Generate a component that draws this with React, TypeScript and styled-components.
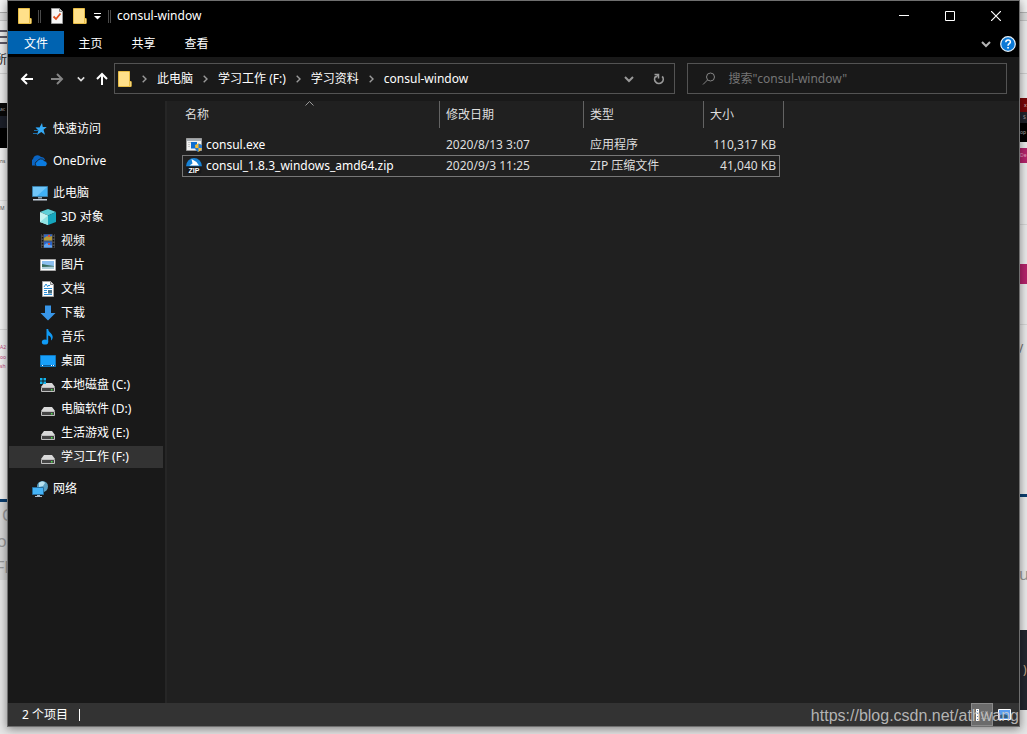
import React from "react";
import styled, { createGlobalStyle } from "styled-components";

const Global = createGlobalStyle`
  * { box-sizing: border-box; }
  body { margin: 0; background: #e6e6e6; }
  body, button, input, table {
    font-family: "Noto Sans", "Noto Sans CJK SC", sans-serif;
    font-size: 12px;
    line-height: 16px;
  }
  button { border: 0; padding: 0; background: none; color: inherit; cursor: default; }
  a { color: inherit; text-decoration: none; cursor: default; }
  svg { display: block; flex: none; }
`;

/* ---------- desktop behind the window ---------- */

const Desktop = styled.div`
  display: grid;
  grid-template-columns: 7px minmax(0, 1fr) 7px;
  grid-template-rows: minmax(0, 1fr) 7px;
  min-height: 100vh;
  overflow: hidden;
`;

const Strip = styled.div`
  grid-row: 1;
  display: flex;
  flex-direction: column;
  overflow: hidden;
`;

const Band = styled.div<{ $h: number; $bg?: string; $fg?: string; $size?: number; $shift?: number }>`
  flex: none;
  height: ${(p) => p.$h}px;
  background: ${(p) => p.$bg || "#ebebeb"};
  color: ${(p) => p.$fg || "#555"};
  font-size: ${(p) => p.$size || 5}px;
  line-height: ${(p) => p.$h}px;
  text-indent: ${(p) => p.$shift || 0}px;
  white-space: nowrap;
  overflow: hidden;
`;

type BandData = { h: number; bg?: string; fg?: string; size?: number; shift?: number; text?: string };

const leftBands: BandData[] = [
  { h: 12, bg: "#f1f1f1" },
  { h: 1, bg: "#a9a9a9" },
  { h: 7, bg: "#dcdcdc" },
  { h: 1, bg: "#c4c4c4" },
  { h: 9 },
  { h: 2, bg: "#5c5866" },
  { h: 4 },
  { h: 2, bg: "#5c5866" },
  { h: 4 },
  { h: 2, bg: "#5c5866" },
  { h: 8 },
  { h: 16, fg: "#222", size: 12, shift: -5, text: "所" },
  { h: 5 },
  { h: 1, bg: "#cfcfcf" },
  { h: 29 },
  { h: 13, bg: "#080808", fg: "#aaa", text: "ac" },
  { h: 12, bg: "#1b1f29" },
  { h: 20, bg: "#000" },
  { h: 6, bg: "#f0f0f0" },
  { h: 14, bg: "#f0f0f0", text: "ns" },
  { h: 32, bg: "#f0f0f0" },
  { h: 1, bg: "#dfdfdf" },
  { h: 14, bg: "#f0f0f0", text: "M" },
  { h: 114, bg: "#f0f0f0" },
  { h: 1, bg: "#d6d6d6" },
  { h: 12, bg: "#f0f0f0" },
  { h: 10, bg: "#f0f0f0", fg: "#c2457c", text: "A2" },
  { h: 10, bg: "#f0f0f0", fg: "#c2457c", text: "oo" },
  { h: 9, bg: "#f0f0f0", fg: "#c2457c", text: "sh" },
  { h: 128, bg: "#f0f0f0" },
  { h: 3, bg: "#0b3f70" },
  { h: 26, bg: "#d6d6d6", fg: "#999", size: 16, shift: 2, text: "C" },
  { h: 26, bg: "#d6d6d6", fg: "#999", size: 16, shift: -3, text: "or" },
  { h: 26, bg: "#d6d6d6", fg: "#999", size: 16, shift: -4, text: "FF" },
];

const rightBands: BandData[] = [
  { h: 12, bg: "#f1f1f1" },
  { h: 1, bg: "#b5b5b5" },
  { h: 7, bg: "#dcdcdc" },
  { h: 1, bg: "#c4c4c4" },
  { h: 52 },
  { h: 1, bg: "#cfcfcf" },
  { h: 24 },
  { h: 14, bg: "#7a0608", fg: "#ddd", shift: 4, text: "x" },
  { h: 11, bg: "#20232b", fg: "#aaa", shift: 3, text: "S" },
  { h: 19, bg: "#000", fg: "#bbb", text: "op" },
  { h: 6 },
  { h: 15, bg: "#b5236b", fg: "#eaa9c8", text: "De" },
  { h: 61 },
  { h: 1, bg: "#d6d6d6" },
  { h: 39 },
  { h: 20, bg: "#b5236b" },
  { h: 40 },
  { h: 1, bg: "#d6d6d6" },
  { h: 16 },
  { h: 16, fg: "#777", size: 12, shift: -4, text: "V" },
  { h: 137 },
  { h: 3, bg: "#0b3f70" },
  { h: 64 },
  { h: 26, fg: "#999", size: 16, shift: -1, text: "u" },
  { h: 43 },
  { h: 80, bg: "#23262f", fg: "#c9a98a", size: 12, shift: 3, text: ")" },
];

const Bands = ({ items }: { items: BandData[] }) => (
  <Strip aria-hidden="true">
    {items.map((b, i) => (
      <Band key={i} $h={b.h} $bg={b.bg} $fg={b.fg} $size={b.size} $shift={b.shift}>
        {b.text}
      </Band>
    ))}
  </Strip>
);

/* ---------- window frame ---------- */

const Window = styled.main`
  position: relative;
  grid-row: 1;
  display: flex;
  flex-direction: column;
  border: 1px solid #6f6f6f;
  background: #202020;
  color: #fff;
  box-shadow: 0 2px 9px rgba(0, 0, 0, 0.45);
`;

const TitleBar = styled.header`
  display: flex;
  align-items: center;
  height: 30px;
  padding-left: 10px;
  background: #000;
`;

const QuickTools = styled.div`
  display: flex;
  align-items: center;
  gap: 6px;
`;

const QuickButton = styled.button`
  padding: 0 4px;
  &:nth-of-type(2) { padding: 0; }
  &:nth-of-type(3) { padding: 0; }
`;

const Divider = styled.span`
  width: 3px;
  height: 13px;
  border: 1px solid #4a4a4a;
  border-width: 0 1px;
`;

const Title = styled.h1`
  flex: 1;
  margin: 0 0 0 6px;
  font-size: 12px;
  font-weight: 400;
`;

const CaptionButton = styled.button`
  display: flex;
  align-items: center;
  justify-content: center;
  width: 46px;
  height: 30px;
`;

const CaptionButtons = styled.div`
  display: flex;
`;

const Ribbon = styled.nav`
  display: flex;
  height: 26px;
  background: #000;
`;

const RibbonTab = styled.button<{ $active?: boolean }>`
  width: ${(p) => (p.$active ? 56 : 53)}px;
  height: 23px;
  padding-top: 2px;
  background: ${(p) => (p.$active ? "#0063b1" : "transparent")};
`;

const RibbonEnd = styled.div`
  display: flex;
  align-items: center;
  gap: 9px;
  margin-left: auto;
  padding-right: 3px;
`;

/* ---------- address row ---------- */

const AddressRow = styled.div`
  display: flex;
  gap: 12px;
  height: 44px;
  padding: 6px 12px 7px 9px;
  background: #191919;
`;

const History = styled.div`
  display: flex;
  align-items: center;
  gap: 10px;
  margin-right: -7px;
`;

const HistoryButton = styled.button<{ $wide?: boolean }>`
  padding: 0 ${(p) => (p.$wide ? 3 : 0)}px;
`;

const Field = styled.div<{ $grow: number }>`
  display: flex;
  align-items: center;
  flex: ${(p) => p.$grow} 1 0;
  min-width: 0;
  height: 31px;
  border: 1px solid #535353;
`;

const Crumbs = styled.ol`
  display: flex;
  flex: 1;
  align-items: center;
  margin: 0;
  padding: 0 0 0 3px;
  list-style: none;
  white-space: nowrap;
  overflow: hidden;
`;

const Crumb = styled.li`
  display: flex;
  align-items: center;
`;

const CrumbArrow = styled.svg`
  margin: 0 10px;
`;

const FieldButton = styled.button`
  display: flex;
  align-items: center;
  justify-content: center;
  width: 30px;
  height: 29px;
`;

const SearchInput = styled.input`
  flex: 1;
  min-width: 0;
  height: 29px;
  padding: 0 0 0 12px;
  border: 0;
  outline: 0;
  background: transparent;
  color: #fff;
  &::placeholder { color: #757575; opacity: 1; }
`;

/* ---------- body ---------- */

const Body = styled.div`
  display: flex;
  flex: 1;
  min-height: 0;
`;

const Sidebar = styled.nav`
  flex: none;
  width: 159px;
  padding: 17px 2px 0 1px;
  border-right: 2px solid #262626;
  background: #191919;
`;

const Tree = styled.ul`
  display: flex;
  flex-direction: column;
  gap: 2px;
  margin: 0;
  padding: 0;
  list-style: none;
`;

const Node = styled.li<{ $gap?: boolean }>`
  margin-top: ${(p) => (p.$gap ? 8 : 0)}px;
`;

const NodeLink = styled.a<{ $child?: boolean; $current?: boolean }>`
  display: flex;
  align-items: center;
  gap: 5px;
  height: 22px;
  padding-left: ${(p) => (p.$child ? 31 : 23)}px;
  background: ${(p) => (p.$current ? "#333" : "transparent")};
  white-space: nowrap;
`;

const Files = styled.section`
  flex: 1;
  min-width: 0;
  padding-left: 15px;
  overflow: hidden;
`;

const FileTable = styled.table`
  width: 602px;
  table-layout: fixed;
  border-collapse: separate;
  border-spacing: 0;
  color: #dedede;
`;

const Head = styled.th`
  position: relative;
  height: 27px;
  padding: 0 0 0 6px;
  border-right: 1px solid #636363;
  font-weight: 400;
  text-align: left;
  &:first-child { padding-left: 3px; }
`;

const SortMark = styled.svg`
  position: absolute;
  top: 0;
  left: 50%;
  margin-left: -6px;
`;

const Spacer = styled.td`
  height: 6px;
  padding: 0;
`;

const Cell = styled.td<{ $focus?: boolean; $right?: boolean }>`
  height: ${(p) => (p.$focus ? 22 : 21)}px;
  padding: 0 4px 0 6px;
  border: 0 solid #777;
  border-width: ${(p) => (p.$focus ? "1px 0" : "0")};
  text-align: ${(p) => (p.$right ? "right" : "left")};
  white-space: nowrap;
  &:first-child {
    padding-left: ${(p) => (p.$focus ? 3 : 4)}px;
    border-left-width: ${(p) => (p.$focus ? 1 : 0)}px;
    color: #fff;
  }
  &:nth-child(4) {
    padding-right: ${(p) => (p.$focus ? 3 : 4)}px;
    border-right-width: ${(p) => (p.$focus ? 1 : 0)}px;
  }
`;

const FileName = styled.a`
  display: flex;
  align-items: center;
  gap: 4px;
`;

const StatusBar = styled.footer`
  display: flex;
  align-items: center;
  height: 23px;
  padding: 0 3px 0 14px;
  background: #333;
`;

const StatusText = styled.span`
  padding-right: 11px;
  border-right: 1px solid #fff;
  line-height: 12px;
`;

const ViewButtons = styled.div`
  display: flex;
  margin-left: auto;
`;

const ViewButton = styled.button<{ $on?: boolean }>`
  display: flex;
  align-items: center;
  justify-content: center;
  width: ${(p) => (p.$on ? 22 : 23)}px;
  height: 23px;
  border: 1px solid ${(p) => (p.$on ? "#8a8a8a" : "transparent")};
  background: ${(p) => (p.$on ? "#6b6b6b" : "transparent")};
`;

const Watermark = styled.span`
  position: absolute;
  right: 0;
  bottom: 0;
  color: rgba(205, 205, 205, 0.85);
  font-family: "Liberation Sans", Arial, sans-serif;
  font-size: 16px;
  line-height: 20px;
  pointer-events: none;
`;

/* ---------- icons ---------- */

const Folder = () => (
  <svg width="14" height="16" viewBox="0 0 14 16">
    <path d="M.5.5h11v10h1.500v5H.5z" fill="#ffe08a" stroke="#e8bd45" />
    <path d="M11.500 10.500h1.500v5h-1.500z" fill="#fff0b8" stroke="#e8bd45" />
  </svg>
);

const CheckDoc = () => (
  <svg width="12" height="16" viewBox="0 0 12 16">
    <path d="M.5.5h8l3 3v12H.5z" fill="#f7f7f7" stroke="#9a9a9a" />
    <path d="M8.500.5v3h3" fill="#ccc" stroke="#888" />
    <path d="M2.500 8.500l2.500 2.500L9.500 5.500" fill="none" stroke="#e0501f" strokeWidth="1.800" />
  </svg>
);

const Chevron = ({ w = 10, color = "#ccc", sw = 2 }: { w?: number; color?: string; sw?: number }) => (
  <svg width={w} height={w} viewBox="0 0 10 10">
    <path d="M1 3l4 4 4-4" fill="none" stroke={color} strokeWidth={sw} />
  </svg>
);

const Arrow = ({ turn = 0, color = "#fff" }: { turn?: number; color?: string }) => (
  <svg width="14" height="14" viewBox="0 0 14 14">
    <path
      transform={`rotate(${turn} 7 7)`}
      d="M13 7H2M7 2L2 7l5 5"
      fill="none"
      stroke={color}
      strokeWidth="2"
    />
  </svg>
);

const Ico = ({ children }: { children: React.ReactNode }) => (
  <svg width="16" height="16" viewBox="0 0 16 16">{children}</svg>
);

const StarIcon = () => (
  <Ico>
    <path d="M10 2l.8 4h4l-3.300 2.800 1.500 5L9.300 11l-4.500 3 1.700-4.500L3.500 6.500h4z" fill="#35aaf5" />
    <path d="M4 6.500h3M2 9.500h4M1 12.500h4" stroke="#1b6fae" />
  </Ico>
);

const CloudIcon = () => (
  <Ico>
    <path d="M1 12.500a3 3 0 0 1 0-6A4.500 4.500 0 0 1 9 4a4 4 0 0 1 4 3l-4 1-5 4.500z" fill="#0a64c2" />
    <path d="M5 13.500a2.800 2.800 0 0 1 .3-5.300 4 4 0 0 1 7-.5 3 3 0 0 1 1 5.800z" fill="#0a7be0" stroke="#191919" strokeWidth=".8" />
  </Ico>
);

const PcIcon = () => (
  <Ico>
    <path d="M.5 1.500h15v10H.5z" fill="#41b1f5" stroke="#3a7ea8" />
    <path d="M1 2h14L5 11H1z" fill="#8fd3fc" opacity=".6" />
    <path d="M6 12h4v1.500H6z" fill="#8aa0b0" />
    <path d="M1 14h14v1.500H1z" fill="#c5d0dc" />
  </Ico>
);

const CubeIcon = () => (
  <Ico>
    <path d="M8 0l8 3-8 3.500L0 3z" fill="#5ecfd8" />
    <path d="M0 3l8 3.500V16l-8-3z" fill="#c4f3f1" />
    <path d="M16 3L8 6.500V16l8-3z" fill="#16a6bd" />
    <path d="M0 13l8-6.500V16z" fill="#8fe2e2" />
  </Ico>
);

const FilmIcon = () => (
  <Ico>
    <path d="M1 1h14v14H1z" fill="#4c4c4c" />
    <path d="M2.500 1v14M13.500 1v14" stroke="#111" strokeWidth="1.500" strokeDasharray="1.500 1.500" />
    <path d="M4 1.500h8v6H4zM4 8.500h8v6H4z" fill="#2d65c8" />
    <path d="M4 5l3-2 2 1 3-1v4.500H4z" fill="#b79b35" />
    <path d="M4 14.500V12l3-2 2 2 3 .5v2z" fill="#62a6ef" />
    <path d="M8 2h2v2H8zM8 10h2v2H8z" fill="#d4503e" />
  </Ico>
);

const PhotoIcon = () => (
  <Ico>
    <path d="M.5 2.500h15v11H.5z" fill="#fff" stroke="#a9a9a9" />
    <path d="M2 4h12v8H2z" fill="#8cc0f0" />
    <path d="M2 7l5 1 7 1v1H2z" fill="#366c5d" />
    <path d="M2 10l12-.5V12H2z" fill="#aed0db" />
  </Ico>
);

const DocIcon = () => (
  <Ico>
    <path d="M2.500.5h8l3 3v12h-11z" fill="#fff" stroke="#a4a4a4" />
    <path d="M10.500.5v3h3" fill="#ddd" stroke="#888" />
    <path d="M4 6l2-3 2 3M8 4.500h2M4 7.500h8M4 9.500h3M4 11.500h3M4 13.500h8" fill="none" stroke="#2c8fd8" />
    <path d="M8 9h4v3.500H8z" fill="#4a7287" />
  </Ico>
);

const DownIcon = () => (
  <Ico>
    <path d="M5 .5h6V8h4.500L8 15.500.5 8H5z" fill="#3896e8" />
  </Ico>
);

const MusicIcon = () => (
  <Ico>
    <ellipse cx="5" cy="13" rx="3.200" ry="2.600" fill="#109bf5" />
    <path d="M6.500 0h1.700c0 3.500 5 4.500 4.500 8.500-.2 1.500-1 2.500-1.700 3 .6-3-.8-4.500-2.800-5V13H6.500z" fill="#109bf5" />
  </Ico>
);

const DeskIcon = () => (
  <Ico>
    <path d="M.5 2.500h15v11H.5z" fill="#18a0fb" stroke="#0f78c0" />
    <path d="M1 12.500h14" stroke="#0b5c9b" />
    <path d="M2 12.500h1M11 12.500h1M13 12.500h1" stroke="#fff" />
  </Ico>
);

const DriveIcon = ({ system }: { system?: boolean }) => (
  <Ico>
    <path d="M4 6h8l3 4H1z" fill="#d9d9d9" />
    <path d="M1.500 10.500h13v4h-13z" fill="#454545" stroke="#bfbfbf" />
    <path d="M11 12h1.500v1.500H11z" fill="#4be04b" />
    {system && <path d="M0 1h2.500v2.500H0zM3.500 1H6v2.500H3.500zM0 4.500h2.500V7H0zM3.500 4.500H6V7H3.500z" fill="#12b4ee" />}
  </Ico>
);

const NetIcon = () => (
  <Ico>
    <circle cx="10.500" cy="5.500" r="5.500" fill="#5b9fc0" />
    <path d="M7 2c2-2 5-2 6 0l-2 3-4 1z" fill="#b9e2f0" />
    <path d="M.5 6.500h11v7H.5z" fill="#45b4f8" stroke="#286f9f" />
    <path d="M5 14h3v1H5zM3 15h7v1H3z" fill="#a9bccb" />
  </Ico>
);

const ExeIcon = () => (
  <Ico>
    <path d="M.5 1.500h15v12H.5z" fill="#f2f2f2" stroke="#9c9c9c" />
    <path d="M1 2h14v2H1z" fill="#a5abb0" />
    <path d="M2 5.500h3M2 7.500h2M2 9.500h2" stroke="#c8c8c8" />
    <path d="M5 5h6v6.500H5z" fill="#0f6fd0" />
    <path d="M9 8l3.500-1.500L16 8c0 4-1.500 6-3.500 7C10.500 14 9 12 9 8z" fill="#f4bd32" />
    <path d="M12.500 6.500L16 8v3h-3.500zM9 11h3.500v4C10.500 14 9.500 13 9 11z" fill="#2878cf" />
  </Ico>
);

const ZipIcon = () => (
  <Ico>
    <path d="M0 8.500a8 8.500 0 0 1 16 0z" fill="#1683d8" />
    <path d="M5.500 1l5 3 1 1.500 1.500 2H7.500L3.500 7.500l3-2z" fill="#fff" />
    <path d="M0 8.500h16l-1 7H1z" fill="#17191c" />
    <text x="8" y="15" textAnchor="middle" fill="#fff" fontSize="7" fontWeight="700" fontFamily="Liberation Sans, sans-serif">ZIP</text>
  </Ico>
);

/* ---------- data ---------- */

type TreeItem = { label: string; icon: React.ReactNode; child?: boolean; gap?: boolean; current?: boolean };

const tree: TreeItem[] = [
  { label: "快速访问", icon: <StarIcon /> },
  { label: "OneDrive", icon: <CloudIcon />, gap: true },
  { label: "此电脑", icon: <PcIcon />, gap: true },
  { label: "3D 对象", icon: <CubeIcon />, child: true },
  { label: "视频", icon: <FilmIcon />, child: true },
  { label: "图片", icon: <PhotoIcon />, child: true },
  { label: "文档", icon: <DocIcon />, child: true },
  { label: "下载", icon: <DownIcon />, child: true },
  { label: "音乐", icon: <MusicIcon />, child: true },
  { label: "桌面", icon: <DeskIcon />, child: true },
  { label: "本地磁盘 (C:)", icon: <DriveIcon system />, child: true },
  { label: "电脑软件 (D:)", icon: <DriveIcon />, child: true },
  { label: "生活游戏 (E:)", icon: <DriveIcon />, child: true },
  { label: "学习工作 (F:)", icon: <DriveIcon />, child: true, current: true },
  { label: "网络", icon: <NetIcon />, gap: true },
];

const files = [
  { name: "consul.exe", icon: <ExeIcon />, date: "2020/8/13 3:07", type: "应用程序", size: "110,317 KB", focus: false },
  { name: "consul_1.8.3_windows_amd64.zip", icon: <ZipIcon />, date: "2020/9/3 11:25", type: "ZIP 压缩文件", size: "41,040 KB", focus: true },
];

const crumbs = ["此电脑", "学习工作 (F:)", "学习资料", "consul-window"];

export default function App() {
  return (
    <Desktop>
      <Global />
      <Bands items={leftBands} />
      <Window>
        <TitleBar>
          <QuickTools>
            <Folder />
            <Divider />
            <QuickButton aria-label="属性"><CheckDoc /></QuickButton>
            <QuickButton aria-label="新建文件夹"><Folder /></QuickButton>
            <QuickButton aria-label="自定义快速访问工具栏">
              <svg width="9" height="8" viewBox="0 0 9 8">
                <path d="M1 1.500h7" stroke="#fff" />
                <path d="M1 4h7L4.500 7.500z" fill="#fff" />
              </svg>
            </QuickButton>
            <Divider />
          </QuickTools>
          <Title>consul-window</Title>
          <CaptionButtons>
            <CaptionButton aria-label="最小化">
              <svg width="10" height="10" viewBox="0 0 10 10"><path d="M0 4.500h10" stroke="#fff" /></svg>
            </CaptionButton>
            <CaptionButton aria-label="最大化">
              <svg width="10" height="10" viewBox="0 0 10 10"><path d="M.5.5h9v9h-9z" fill="none" stroke="#fff" /></svg>
            </CaptionButton>
            <CaptionButton aria-label="关闭">
              <svg width="10" height="10" viewBox="0 0 10 10"><path d="M0 0l10 10M10 0L0 10" stroke="#fff" strokeWidth="1.200" /></svg>
            </CaptionButton>
          </CaptionButtons>
        </TitleBar>

        <Ribbon>
          <RibbonTab $active>文件</RibbonTab>
          <RibbonTab>主页</RibbonTab>
          <RibbonTab>共享</RibbonTab>
          <RibbonTab>查看</RibbonTab>
          <RibbonEnd>
            <button aria-label="展开功能区"><Chevron color="#b5b5b5" /></button>
            <button aria-label="帮助">
              <svg width="16" height="16" viewBox="0 0 16 16">
                <circle cx="8" cy="8" r="7.300" fill="#0a78d6" stroke="#e8f2fa" strokeWidth="1.200" />
                <path d="M5.800 6.200c0-3 4.600-3 4.600-.3C10.400 7.600 8 7.700 8 9.700" fill="none" stroke="#fff" strokeWidth="1.500" />
                <path d="M7.200 11h1.700v1.600H7.200z" fill="#fff" />
              </svg>
            </button>
          </RibbonEnd>
        </Ribbon>

        <AddressRow>
          <History>
            <HistoryButton $wide aria-label="后退"><Arrow /></HistoryButton>
            <HistoryButton $wide aria-label="前进"><Arrow turn={180} color="#858585" /></HistoryButton>
            <HistoryButton aria-label="最近浏览的位置"><Chevron w={8} color="#ddd" /></HistoryButton>
            <HistoryButton aria-label="上移"><Arrow turn={90} /></HistoryButton>
          </History>
          <Field $grow={562}>
            <Crumbs>
              <Folder />
              {crumbs.map((c) => (
                <Crumb key={c}>
                  <CrumbArrow width="5" height="8" viewBox="0 0 5 8">
                    <path d="M.7.7L4 4 .7 7.300" fill="none" stroke="#9a9a9a" strokeWidth="1.400" />
                  </CrumbArrow>
                  <button>{c}</button>
                </Crumb>
              ))}
            </Crumbs>
            <FieldButton aria-label="以前的位置"><Chevron color="#999" /></FieldButton>
            <FieldButton aria-label="刷新">
              <svg width="12" height="12" viewBox="0 0 12 12">
                <path d="M2.800 3.200A4.300 4.300 0 1 0 9.200 3.400" fill="none" stroke="#999" strokeWidth="1.700" />
                <path d="M1.500 1.500h4v4" fill="none" stroke="#999" strokeWidth="1.500" />
                <path d="M5 2L2.500 4.500" stroke="#999" strokeWidth="1.500" />
              </svg>
            </FieldButton>
          </Field>
          <Field $grow={319} as="label">
            <svg width="28" height="14" viewBox="0 0 28 14">
              <circle cx="22.500" cy="5" r="4" fill="none" stroke="#858585" />
              <path d="M19.500 8L15 12.500" stroke="#858585" />
            </svg>
            <SearchInput type="text" aria-label="搜索" placeholder={'搜索"consul-window"'} />
          </Field>
        </AddressRow>

        <Body>
          <Sidebar>
            <Tree>
              {tree.map((n) => (
                <Node key={n.label} $gap={n.gap}>
                  <NodeLink href="#" $child={n.child} $current={n.current}>
                    {n.icon}
                    {n.label}
                  </NodeLink>
                </Node>
              ))}
            </Tree>
          </Sidebar>
          <Files>
            <FileTable>
              <colgroup>
                <col width="258" />
                <col width="144" />
                <col width="120" />
                <col width="76" />
                <col width="4" />
              </colgroup>
              <thead>
                <tr>
                  <Head scope="col">
                    名称
                    <SortMark width="9" height="5" viewBox="0 0 9 5">
                      <path d="M.5 4.500l4-4 4 4" fill="none" stroke="#999" />
                    </SortMark>
                  </Head>
                  <Head scope="col">修改日期</Head>
                  <Head scope="col">类型</Head>
                  <Head scope="col" colSpan={2}>大小</Head>
                </tr>
              </thead>
              <tbody>
                <tr><Spacer colSpan={5} /></tr>
                {files.map((f) => (
                  <tr key={f.name}>
                    <Cell $focus={f.focus}><FileName href="#">{f.icon}{f.name}</FileName></Cell>
                    <Cell $focus={f.focus}>{f.date}</Cell>
                    <Cell $focus={f.focus}>{f.type}</Cell>
                    <Cell $focus={f.focus} $right>{f.size}</Cell>
                  </tr>
                ))}
              </tbody>
            </FileTable>
          </Files>
        </Body>

        <StatusBar>
          <StatusText>2 个项目</StatusText>
          <ViewButtons>
            <ViewButton $on aria-label="详细信息">
              <svg width="14" height="12" viewBox="0 0 14 12">
                <path d="M1 0h3v12H1z" fill="#fff" />
                <path d="M2.500 1v10" stroke="#5a7fb0" strokeDasharray="1 2" />
                <path d="M6 2.500h3M10 2.500h3M6 6h3M10 6h3M6 9.500h3M10 9.500h3" stroke="#8a8a8a" />
              </svg>
            </ViewButton>
            <ViewButton aria-label="大图标">
              <svg width="13" height="11" viewBox="0 0 13 11">
                <path d="M.5.5h12v10H.5z" fill="#5a9df0" stroke="#fff" />
                <path d="M2 6l4-1 5 2v2H2z" fill="#2f5f86" />
              </svg>
            </ViewButton>
          </ViewButtons>
        </StatusBar>
        <Watermark>https://blog.csdn.net/athwang</Watermark>
      </Window>
      <Bands items={rightBands} />
    </Desktop>
  );
}
